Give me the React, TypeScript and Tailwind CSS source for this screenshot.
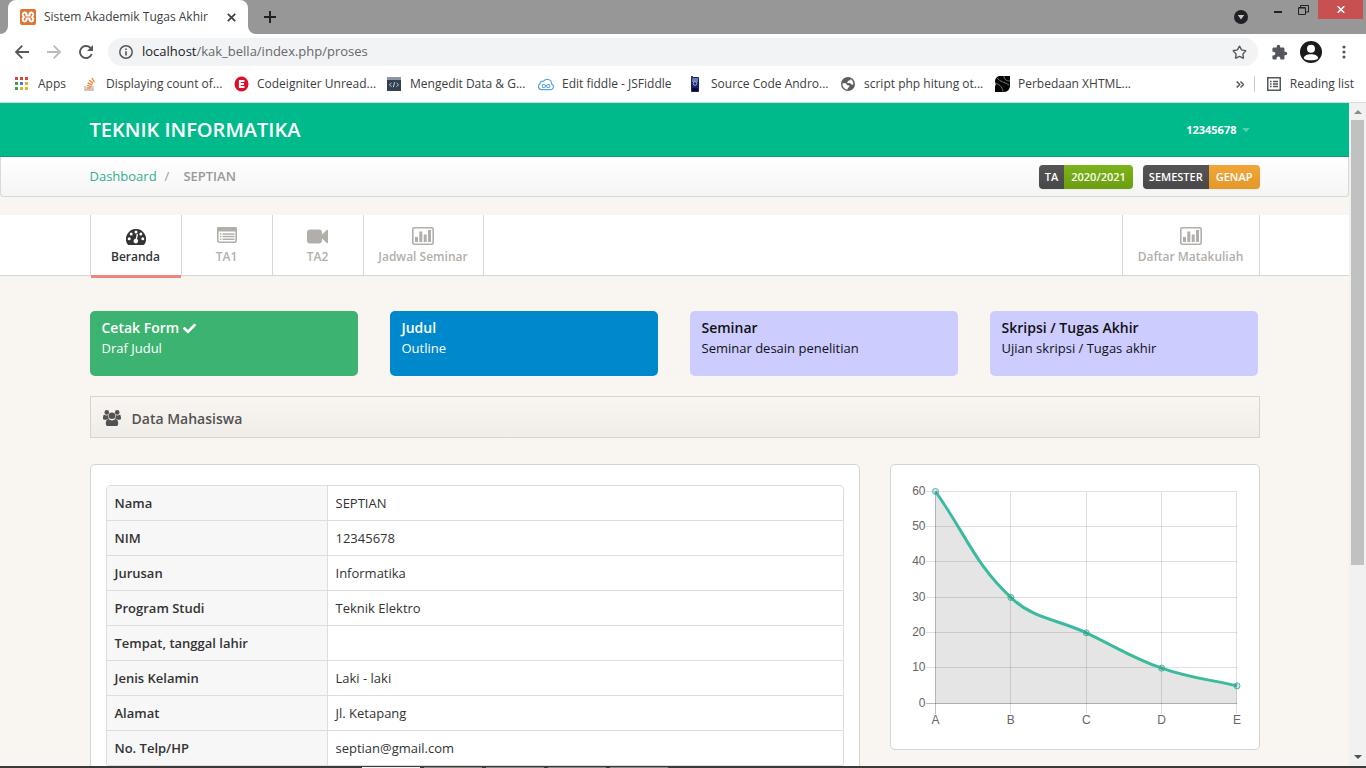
import React from "react";
import { Star } from "lucide-react";
import { MdExtension } from "react-icons/md";
import { FaCheck } from "react-icons/fa";

type IconProps = { className?: string };

function XamppIcon() {
  return (
    <svg width="16" height="16" viewBox="0 0 16 16" aria-hidden="true">
      <rect width="16" height="16" rx="2" fill="#df7330" />
      <path
        d="M6.300 4.300C5 2.800 2.700 3.600 2.700 5.500c0 1 .5 1.700 1.300 2.500-.8.800-1.300 1.500-1.300 2.500 0 1.900 2.300 2.700 3.600 1.200V9.500h3.400v2.200c1.300 1.500 3.600.700 3.600-1.200 0-1-.5-1.700-1.300-2.500.8-.8 1.300-1.500 1.300-2.500 0-1.900-2.300-2.700-3.600-1.200v2.200H6.300z"
        fill="none"
        stroke="#fff"
        strokeWidth="1.900"
        strokeLinejoin="round"
      />
    </svg>
  );
}

function AppsIcon() {
  const colors = ["#d84a3b", "#d84a3b", "#d84a3b", "#3f9c57", "#3c7de0", "#e5b133", "#3f9c57", "#e5b133", "#e5b133"];
  return (
    <svg width="14" height="14" viewBox="0 0 14 14" aria-hidden="true">
      {colors.map((c, i) => (
        <rect key={i} x={(i % 3) * 5} y={Math.floor(i / 3) * 5} width="3" height="3" fill={c} />
      ))}
    </svg>
  );
}

function StackIcon() {
  return (
    <svg width="12" height="14" viewBox="0 0 12 14" aria-hidden="true">
      <path d="M1 9v4h8V9" fill="none" stroke="#b5b5b5" strokeWidth="1.3" />
      <path d="M2.6 11h5M2.7 8.6l5 .8M3.6 5.8l4.6 2M5.3 3.3l3.8 3.2M7.8 1l2.700 4.2" stroke="#ef8236" strokeWidth="1.3" />
    </svg>
  );
}

function EIcon() {
  return (
    <svg width="15" height="16" viewBox="0 0 15 16" aria-hidden="true">
      <ellipse cx="7.5" cy="8" rx="7" ry="7.5" fill="#dc0f2d" />
      <path d="M10.400 5H5.800v6h4.600M5.800 8h4.200" fill="none" stroke="#fff" strokeWidth="1.800" />
    </svg>
  );
}

function CodeIcon() {
  return (
    <svg width="14" height="14" viewBox="0 0 14 14" aria-hidden="true">
      <rect width="14" height="14" fill="#31414f" />
      <rect width="14" height="3" fill="#8797a8" />
      <path d="M4.500 5.800 2.500 7.800l2 2M9.500 5.800l2 2-2 2M7.700 5.200l-1.400 5" fill="none" stroke="#c9d2da" />
    </svg>
  );
}

function FiddleIcon() {
  return (
    <svg width="17" height="13" viewBox="0 0 17 13" aria-hidden="true">
      <path
        d="M4 12h9.300a3.200 3.200 0 0 0 1.200-6.100A4.800 4.800 0 0 0 5.600 3.300 2.400 2.400 0 0 0 2.200 6 3.200 3.200 0 0 0 4 12z"
        fill="none"
        stroke="#58a3e2"
        strokeWidth="1.300"
      />
      <path
        d="M8.500 8.200C7.600 7 6.900 6.500 6.100 6.500a1.700 1.700 0 0 0 0 3.400c1.600 0 3-3.400 4.800-3.400a1.700 1.700 0 0 1 0 3.400c-.8 0-1.500-.6-2.400-1.700z"
        fill="none"
        stroke="#58a3e2"
        strokeWidth="1.100"
      />
    </svg>
  );
}

function PhoneIcon() {
  return (
    <svg width="8" height="16" viewBox="0 0 8 16" aria-hidden="true">
      <rect y="1" width="8" height="15" rx="1" fill="#1b2260" />
      <rect x="1" y="2" width="6" height="4" fill="#6d7cb4" />
      <circle cx="4" cy="7.500" r="1.800" fill="none" stroke="#9fb0e8" />
      <rect x="1" y="12" width="6" height="3" fill="#0a0d30" />
      <rect width="2" height="3" fill="#3a3f6b" />
    </svg>
  );
}

function GlobeIcon() {
  return (
    <svg width="14" height="14" viewBox="0 0 14 14" aria-hidden="true">
      <circle cx="7" cy="7" r="7" fill="#5a5d61" />
      <path d="M1.500 6.200h2.600c1 0 1.400.5 1.600 1.200.2.800.9.700 1.700.8.900.1 1.200.8.900 1.600-.3.900-1.300.7-1.500 1.500l-.3 1.300C3.700 12.400 1.200 9.800 1.500 6.200z" fill="#fff" />
      <path d="M9.600 1.900c-.1 1.200-.8 1.600-1.700 1.700-.7.100-.6.900-1.300 1.200-.7.200-.6 1.100.2 1.300 1.200.2 2.200-.1 2.900.7.600.8 1.400 1 2.600.8.400-2.500-.8-4.600-2.700-5.700z" fill="#fff" />
    </svg>
  );
}

function BallIcon() {
  return (
    <svg width="15" height="16" viewBox="0 0 15 16" aria-hidden="true">
      <path d="M5 0h10v9c0 4-2 7-6 7H0V10c1.200-1 1-2 0-4C0 2.500 2 0 5 0z" fill="#050505" />
      <path d="M0 7.500c4 0 7 3 8 8M2 2c3 4 8 4 12 7M9 0c0 3 2 5 6 5" fill="none" stroke="#8c8c8c" strokeWidth=".8" />
    </svg>
  );
}

function ReadingListIcon() {
  return (
    <svg width="14" height="14" viewBox="0 0 14 14" aria-hidden="true">
      <rect x=".75" y=".75" width="12.500" height="12.500" fill="none" stroke="#54575b" strokeWidth="1.500" />
      <path d="M3 4.500h1.600M3 7h1.600M3 9.500h1.600M6 4.500h5M6 7h5M6 9.500h5" stroke="#54575b" strokeWidth="1.300" />
    </svg>
  );
}

function DashIcon({ className }: IconProps) {
  return (
    <svg width="20" height="16" viewBox="0 0 20 16" className={className} aria-hidden="true">
      <path d="M10 0a10 10 0 0 0-8.500 15.300c.2.400.5.700 1 .700h15c.5 0 .8-.300 1-.700A10 10 0 0 0 10 0z" fill="currentColor" />
      <g fill="#fff">
        <circle cx="3.200" cy="9.800" r="1.500" />
        <circle cx="5.200" cy="4.900" r="1.500" />
        <circle cx="10" cy="2.900" r="1.500" />
        <circle cx="14.800" cy="4.900" r="1.500" />
        <circle cx="16.800" cy="9.800" r="1.500" />
        <path d="m9.700 9.800 1-4.800 1.400.300-1.100 4.800a2.300 2.300 0 1 1-1.300-.300z" />
      </g>
    </svg>
  );
}

function ListIcon({ className }: IconProps) {
  return (
    <svg width="20" height="16" viewBox="0 0 20 16" className={className} aria-hidden="true">
      <rect x=".8" y=".8" width="18.400" height="14.400" rx="1.600" fill="none" stroke="currentColor" strokeWidth="1.600" />
      <rect width="20" height="4.500" rx="1.400" fill="currentColor" />
      <path d="M3 7h1.400M3 9.600h1.400M3 12.200h1.400M5.500 7h12M5.500 9.600h12M5.500 12.200h12" stroke="currentColor" strokeWidth="1.500" />
    </svg>
  );
}

function VideoIcon({ className }: IconProps) {
  return (
    <svg width="21" height="15" viewBox="0 0 21 15" className={className} aria-hidden="true">
      <path
        d="M3.300.500h8.400A3.200 3.200 0 0 1 15 3.700v1.900L19.800.900c.5-.5 1.200-.2 1.200.5v12.200c0 .7-.7 1-1.200.5L15 9.400v1.900a3.200 3.200 0 0 1-3.300 3.200H3.300A3.200 3.200 0 0 1 0 11.300V3.700A3.200 3.200 0 0 1 3.300.500z"
        fill="currentColor"
      />
    </svg>
  );
}

function BarsIcon({ className }: IconProps) {
  return (
    <svg width="22" height="18" viewBox="0 0 22 18" className={className} aria-hidden="true">
      <rect x=".8" y=".8" width="20.400" height="16.400" rx="1.500" fill="none" stroke="currentColor" strokeWidth="1.600" />
      <path d="M3 10h3v5H3zM7.300 4.500h3V15h-3zM11.700 7.500h3V15h-3zM16 3h3v12h-3z" fill="currentColor" />
    </svg>
  );
}

function GroupIcon({ className }: IconProps) {
  return (
    <svg width="18" height="16" viewBox="0 0 18 16" className={className} aria-hidden="true">
      <g fill="currentColor">
        <circle cx="3.800" cy="2.400" r="2.300" />
        <circle cx="14.200" cy="2.400" r="2.300" />
        <path d="M1 4.600c1.400 1.100 3 1.200 4.300.500-.300 1.500 0 2.700.8 3.600-1.300 0-2 .500-2.600 1.100H1.600C.6 9.800 0 9.300 0 8.400c0-1.500.2-3 1-3.800zM17 4.600c-1.400 1.100-3 1.200-4.300.500.300 1.500 0 2.700-.8 3.600 1.300 0 2 .500 2.600 1.100h1.900c1 0 1.600-.500 1.600-1.400 0-1.500-.2-3-1-3.800z" />
        <circle cx="9" cy="5.800" r="3.300" />
        <path d="M5.600 9.100c2 1.700 4.800 1.700 6.800 0 2 .2 2.800 2 2.800 4.600 0 1.500-.9 2.300-2.200 2.300H5c-1.300 0-2.200-.8-2.200-2.300 0-2.600.8-4.400 2.800-4.600z" />
      </g>
    </svg>
  );
}

const bookmarks: { label: string; width: string; icon: React.ReactNode }[] = [
  { label: "Displaying count of...", width: "w-[151px]", icon: <StackIcon /> },
  { label: "Codeigniter Unread...", width: "w-[153px]", icon: <EIcon /> },
  { label: "Mengedit Data & G...", width: "w-[152px]", icon: <CodeIcon /> },
  { label: "Edit fiddle - JSFiddle", width: "w-[149px]", icon: <FiddleIcon /> },
  { label: "Source Code Andro...", width: "w-[153px]", icon: <PhoneIcon /> },
  { label: "script php hitung ot...", width: "w-[154px]", icon: <GlobeIcon /> },
  { label: "Perbedaan XHTML...", width: "w-[140px]", icon: <BallIcon /> },
];

function TabStrip() {
  return (
    <div className="flex h-[34px] items-stretch bg-[#979797]">
      <span className="w-2 bg-white"><span className="block h-full rounded-br-lg bg-[#979797]" /></span>
      <div className="flex w-60 items-center rounded-t-lg bg-white px-3">
        <XamppIcon />
        <span className="ml-2 flex-1 whitespace-nowrap">Sistem Akademik Tugas Akhir</span>
        <button aria-label="Close tab" className="text-[#3c4043]">
          <svg width="9" height="9" viewBox="0 0 9 9"><path d="m.8.8 7.400 7.400M8.200.8.8 8.200" stroke="currentColor" strokeWidth="1.700" /></svg>
        </button>
      </div>
      <span className="w-2 bg-white"><span className="block h-full rounded-bl-lg bg-[#979797]" /></span>
      <button aria-label="New tab" className="ml-2 text-[#202124]">
        <svg width="12" height="12" viewBox="0 0 12 12"><path d="M6 0v12M0 6h12" stroke="currentColor" strokeWidth="2" /></svg>
      </button>
      <div className="flex-1" />
      <button aria-label="Search tabs" className="mr-[26px]">
        <svg width="14" height="14" viewBox="0 0 14 14"><circle cx="7" cy="7" r="7" fill="#202124" /><path d="M3.800 5h6.400L7 9.500z" fill="#c8c8c8" /></svg>
      </button>
      <div className="flex h-[19px] items-center text-[#202124]">
        <button aria-label="Minimize" className="mr-4 pt-[5px]">
          <svg width="8" height="2" viewBox="0 0 8 2"><path d="M0 1h8" stroke="currentColor" strokeWidth="2" /></svg>
        </button>
        <button aria-label="Restore" className="mr-[9px]">
          <svg width="11" height="10" viewBox="0 0 11 10"><path d="M.5 3h7v6.500h-7zM.5 2.500h7M2.500 2V.5h8v6.500H8" fill="none" stroke="currentColor" /></svg>
        </button>
        <button aria-label="Close window" className="mr-[3px] flex h-[19px] w-[45px] items-center justify-center bg-[#c75050] text-white">
          <svg width="8" height="7" viewBox="0 0 8 7"><path d="m.7.300 6.600 6.400M7.300.300.7 6.700" stroke="currentColor" strokeWidth="1.600" /></svg>
        </button>
      </div>
    </div>
  );
}

function Toolbar() {
  return (
    <div className="flex h-9 items-center pr-5 pl-[15px] text-[#54575b]">
      <button aria-label="Back">
        <svg width="14" height="14" viewBox="0 0 14 14"><path d="M7.300.700 1 7l6.300 6.300M1 7h13" fill="none" stroke="currentColor" strokeWidth="1.800" /></svg>
      </button>
      <button aria-label="Forward" className="ml-[18px] text-[#b9bbbe]">
        <svg width="14" height="14" viewBox="0 0 14 14"><path d="M6.700.700 13 7l-6.300 6.300M13 7H0" fill="none" stroke="currentColor" strokeWidth="1.800" /></svg>
      </button>
      <button aria-label="Reload" className="ml-[18px]">
        <svg width="14" height="14" viewBox="0 0 14 14"><path d="M12.700 9a6 6 0 1 1-1.500-6.300L13 4.500" fill="none" stroke="currentColor" strokeWidth="1.900" /><path d="M14 0v6H8z" fill="currentColor" /></svg>
      </button>
      <div className="ml-[15px] flex h-7 flex-1 items-center rounded-full bg-[#f1f3f4] px-[11px]">
        <svg width="14" height="14" viewBox="0 0 14 14" aria-hidden="true"><circle cx="7" cy="7" r="6.200" fill="none" stroke="currentColor" strokeWidth="1.500" /><path d="M7 6.200v4.300M7 3.400v1.600" stroke="currentColor" strokeWidth="1.600" /></svg>
        <a href="#alamat" className="ml-[9px] flex-1 text-[13px] text-[#65686c]">
          <span className="text-[#202124]">localhost</span>/kak_bella/index.php/proses
        </a>
        <Star size={15} strokeWidth={2.2} strokeLinejoin="miter" />
      </div>
      <button aria-label="Extensions" className="ml-[13px]"><MdExtension size={17} /></button>
      <button aria-label="Profile" className="ml-3">
        <svg width="22" height="22" viewBox="0 0 22 22"><circle cx="11" cy="11" r="11" fill="#1b1b1d" /><circle cx="11" cy="7.700" r="4" fill="#fff" /><path d="M3.800 17.500c0-2.800 3.500-4.200 7.200-4.200s7.200 1.400 7.200 4.200c-2 1.500-4.500 1.700-7.200 1.700s-5.200-.2-7.200-1.700z" fill="#fff" /></svg>
      </button>
      <button aria-label="Menu" className="ml-5">
        <svg width="4" height="14" viewBox="0 0 4 14"><g fill="currentColor"><circle cx="2" cy="2" r="1.600" /><circle cx="2" cy="7" r="1.600" /><circle cx="2" cy="12" r="1.600" /></g></svg>
      </button>
    </div>
  );
}

function BookmarkBar() {
  return (
    <div className="flex h-[33px] items-center border-b border-[#d9dbdd] pr-3 pb-1 pl-[15px] whitespace-nowrap">
      <a href="#apps" className="flex w-[67px] items-center gap-[9px]"><AppsIcon />Apps</a>
      {bookmarks.map((b) => (
        <a key={b.label} href="#bookmark" className={"flex items-center gap-2 " + b.width}>
          <span className="flex w-4 shrink-0 justify-center">{b.icon}</span>
          {b.label}
        </a>
      ))}
      <div className="flex-1" />
      <button aria-label="More bookmarks" className="mr-[10px] text-[#54575b]">
        <svg width="8" height="7" viewBox="0 0 8 7"><path d="m.7.500 3 3-3 3M4.500.500l3 3-3 3" fill="none" stroke="currentColor" strokeWidth="1.500" /></svg>
      </button>
      <span className="h-4 w-px bg-[#c6c8ca]" />
      <button className="ml-3 flex items-center gap-[9px]"><ReadingListIcon />Reading list</button>
    </div>
  );
}

function PageHeader() {
  return (
    <header className="h-[54px] border-b border-[#20946f] bg-[#00ba8b]">
      <div className="mx-auto flex h-full max-w-[1170px] items-center justify-between text-white">
        <a href="#beranda" className="text-[20px] font-semibold">TEKNIK INFORMATIKA</a>
        <button className="mr-[10px] flex items-center gap-[5px] text-[11px] leading-4 font-bold">
          12345678
          <svg width="8" height="4" viewBox="0 0 8 4" aria-hidden="true"><path d="M0 0h8L4 4z" fill="#55d0b0" /></svg>
        </button>
      </div>
    </header>
  );
}

function Breadcrumb() {
  return (
    <div className="h-10 rounded-b-[4px] border border-t-0 border-[#d9d9d9] bg-linear-to-b from-white to-[#f5f5f5]">
      <div className="mx-auto flex h-full max-w-[1170px] items-center justify-between">
        <nav aria-label="Breadcrumb" className="flex text-[13px]">
          <a href="#dashboard" className="text-[#32ae90]">Dashboard</a>
          <span className="ml-2 text-[#999]">/</span>
          <span className="ml-[14px] font-semibold text-[#999]">SEPTIAN</span>
        </nav>
        <div className="flex gap-[10px] text-[11px] leading-6 font-semibold text-white">
          <span className="flex overflow-hidden rounded-[4px] shadow-xs">
            <span className="bg-linear-to-b from-[#555] to-[#484848] px-[6px]">TA</span>
            <span className="bg-linear-to-b from-[#7db31b] to-[#6c9d12] px-[7px] text-[#fafff0]">2020/2021</span>
          </span>
          <span className="flex overflow-hidden rounded-[4px] shadow-xs">
            <span className="bg-linear-to-b from-[#555] to-[#484848] px-[6px]">SEMESTER</span>
            <span className="bg-linear-to-b from-[#f3a638] to-[#e3972b] px-[7px]">GENAP</span>
          </span>
        </div>
      </div>
    </div>
  );
}

const navItem = "flex h-[60px] flex-col items-center border-r border-[#d6d6d6] pt-3 text-[12px] leading-[18px] font-semibold";

function MainNav() {
  return (
    <nav aria-label="Utama" className="mt-[18px] border-b border-[#d6d6d6] bg-white text-[#b2afaa]">
      <div className="mx-auto flex max-w-[1170px] border-l border-[#d6d6d6]">
        <a href="#beranda" className={navItem + " relative w-[91px] text-[#333]"}>
          <DashIcon className="mt-[2px] mb-[3px]" />
          Beranda
          <span className="absolute inset-x-0 top-[60px] h-[3px] bg-[#f0837b]" />
        </a>
        <a href="#ta1" className={navItem + " w-[91px]"}><ListIcon className="mb-[5px]" />TA1</a>
        <a href="#ta2" className={navItem + " w-[91px]"}><VideoIcon className="mt-[2px] mb-1" />TA2</a>
        <a href="#jadwal" className={navItem + " w-[120px]"}><BarsIcon className="mb-[3px]" />Jadwal Seminar</a>
        <a href="#matakuliah" className={navItem + " ml-auto w-[138px] border-l"}><BarsIcon className="mb-[3px]" />Daftar Matakuliah</a>
      </div>
    </nav>
  );
}

function StepCard({ title, text, tone, done }: { title: string; text: string; tone: string; done?: boolean }) {
  return (
    <a href="#langkah" className={"block h-[65px] rounded-[5px] px-3 pt-[7px] " + tone}>
      <strong className="flex items-center gap-1 text-[14px] leading-5 font-semibold">
        {title}
        {done && <FaCheck size={13} />}
      </strong>
      <span className="block text-[13px] leading-[21px]">{text}</span>
    </a>
  );
}

const profile: [string, string][] = [
  ["Nama", "SEPTIAN"],
  ["NIM", "12345678"],
  ["Jurusan", "Informatika"],
  ["Program Studi", "Teknik Elektro"],
  ["Tempat, tanggal lahir", ""],
  ["Jenis Kelamin", "Laki - laki"],
  ["Alamat", "Jl. Ketapang"],
  ["No. Telp/HP", "septian@gmail.com"],
];

const grades = [
  { label: "A", value: 60 },
  { label: "B", value: 30 },
  { label: "C", value: 20 },
  { label: "D", value: 10 },
  { label: "E", value: 5 },
];

const plot = { left: 44.5, right: 346, top: 26.5, bottom: 238.5, max: 60 };

function smoothPath(pts: { x: number; y: number }[], tension: number) {
  const controls = pts.map((p, i) => {
    const prev = pts[i - 1] ?? p;
    const next = pts[i + 1] ?? p;
    const d0 = Math.hypot(p.x - prev.x, p.y - prev.y);
    const d1 = Math.hypot(next.x - p.x, next.y - p.y);
    const a = (tension * d0) / (d0 + d1);
    const b = (tension * d1) / (d0 + d1);
    const dx = next.x - prev.x;
    const dy = next.y - prev.y;
    return { inX: p.x - a * dx, inY: p.y - a * dy, outX: p.x + b * dx, outY: p.y + b * dy };
  });
  return pts
    .map((p, i) =>
      i === 0
        ? `M${p.x} ${p.y}`
        : `C${controls[i - 1].outX} ${controls[i - 1].outY} ${controls[i].inX} ${controls[i].inY} ${p.x} ${p.y}`
    )
    .join("");
}

function GradeChart() {
  const { left, right, top, bottom, max } = plot;
  const yOf = (v: number) => bottom - (v / max) * (bottom - top);
  const pts = grades.map((g, i) => ({ x: left + (i * (right - left)) / 4, y: yOf(g.value) }));
  const line = smoothPath(pts, 0.4);
  return (
    <svg viewBox="0 0 368 284" className="w-full" role="img" aria-label="Grafik nilai">
      <g stroke="#000" fill="none" shapeRendering="crispEdges">
        {[60, 50, 40, 30, 20, 10].map((v) => (
          <path key={v} d={`M${left - 10} ${Math.round(yOf(v)) - 0.5}H${right}`} strokeOpacity=".12" />
        ))}
        {pts.slice(1).map((p) => (
          <path key={p.x} d={`M${Math.ceil(p.x) - 0.5} ${top}V${bottom + 10}`} strokeOpacity=".12" />
        ))}
        <path d={`M${left} ${top}V${bottom + 10}`} strokeOpacity=".25" />
        <path d={`M${left - 10} ${bottom}H${right}`} strokeOpacity=".28" />
      </g>
      <path d={`${line}V${bottom}H${left}z`} fill="#000" fillOpacity=".1" />
      <path d={line} fill="none" stroke="#3cba9f" strokeWidth="3" />
      {pts.map((p) => (
        <circle key={p.x} cx={p.x} cy={p.y} r="3" fill="#000" fillOpacity=".1" stroke="#3cba9f" />
      ))}
      <g fill="#666" fontSize="12" fontFamily="'Liberation Sans', Arial, sans-serif">
        {[60, 50, 40, 30, 20, 10, 0].map((v) => (
          <text key={v} x={left - 10} y={Math.round(yOf(v)) + 3} textAnchor="end">{v}</text>
        ))}
        {pts.map((p, i) => (
          <text key={p.x} x={p.x} y={bottom + 20} textAnchor="middle">{grades[i].label}</text>
        ))}
      </g>
    </svg>
  );
}

function Scrollbar() {
  return (
    <div aria-hidden="true" className="flex w-[17px] shrink-0 flex-col items-center bg-[#f1f1f1] py-[7px]">
      <svg width="8" height="4" viewBox="0 0 8 4"><path d="M0 4h8L4 0z" fill="#8b8b8b" /></svg>
      <div className="mt-[6px] w-[13px] grow-[7] bg-[#c1c1c1]" />
      <div className="grow-3" />
      <svg width="8" height="4" viewBox="0 0 8 4"><path d="M0 0h8L4 4z" fill="#505050" /></svg>
    </div>
  );
}

function Page() {
  return (
    <main className="min-w-0 flex-1 overflow-y-auto bg-[#f9f6f1] text-[13px] text-[#333] [scrollbar-width:none]">
      <PageHeader />
      <Breadcrumb />
      <MainNav />
      <div className="mx-auto max-w-[1170px] pt-[35px]">
        <section className="mr-[2px] grid grid-cols-4 gap-8">
          <StepCard title="Cetak Form" text="Draf Judul" tone="bg-[#3cb371] text-white" done />
          <StepCard title="Judul" text="Outline" tone="bg-[#0088cc] text-white" />
          <StepCard title="Seminar" text="Seminar desain penelitian" tone="bg-[#ccccff] text-[#111]" />
          <StepCard title="Skripsi / Tugas Akhir" text="Ujian skripsi / Tugas akhir" tone="bg-[#ccccff] text-[#111]" />
        </section>
        <h2 className="mt-5 flex h-[42px] items-center gap-[11px] border border-[#d6d4d0] bg-linear-to-b from-[#f9f6f1] to-[#f0ede8] px-3 pt-[2px] text-[14px] font-semibold text-[#525252]">
          <GroupIcon />
          Data Mahasiswa
        </h2>
        <div className="mt-[26px] flex items-start gap-[30px]">
          <section className="flex-1 rounded-[5px] border border-[#d5d5d5] bg-white px-[15px] py-5">
            <div className="overflow-hidden rounded-[4px] border border-[#ddd]">
              <table className="w-full border-separate border-spacing-0">
                <tbody>
                  {profile.map(([label, value]) => (
                    <tr key={label}>
                      <th scope="row" className="h-[35px] w-[221px] border-r border-b border-[#ddd] bg-[#f7f7f7] px-2 pt-[2px] pb-0 text-left font-semibold">{label}</th>
                      <td className="h-[35px] border-b border-[#ddd] px-2 pt-[2px] pb-0">{value}</td>
                    </tr>
                  ))}
                </tbody>
              </table>
            </div>
          </section>
          <section className="w-[370px] rounded-[5px] border border-[#d5d5d5] bg-white">
            <GradeChart />
          </section>
        </div>
      </div>
    </main>
  );
}

function Taskbar() {
  return (
    <div aria-hidden="true" className="flex h-[2px] shrink-0 items-end gap-1 bg-[#3a3a38] pl-[362px]">
      <span className="h-px w-[58px] bg-[#f4f4f0]" />
      <span className="h-px w-[58px] bg-[#8b8b86]" />
      <span className="h-px w-[58px] bg-[#8b8b86]" />
      <span className="h-px w-[58px] bg-[#8b8b86]" />
      <span className="h-px w-[58px] bg-[#8b8b86]" />
    </div>
  );
}

export default function App() {
  return (
    <div className="flex h-screen flex-col overflow-hidden bg-white font-['Open_Sans','Noto_Sans',sans-serif] text-[12px] text-[#3c4043]">
      <div className="shrink-0">
        <TabStrip />
        <Toolbar />
        <BookmarkBar />
      </div>
      <div className="flex min-h-0 flex-1">
        <Page />
        <Scrollbar />
      </div>
      <Taskbar />
    </div>
  );
}
